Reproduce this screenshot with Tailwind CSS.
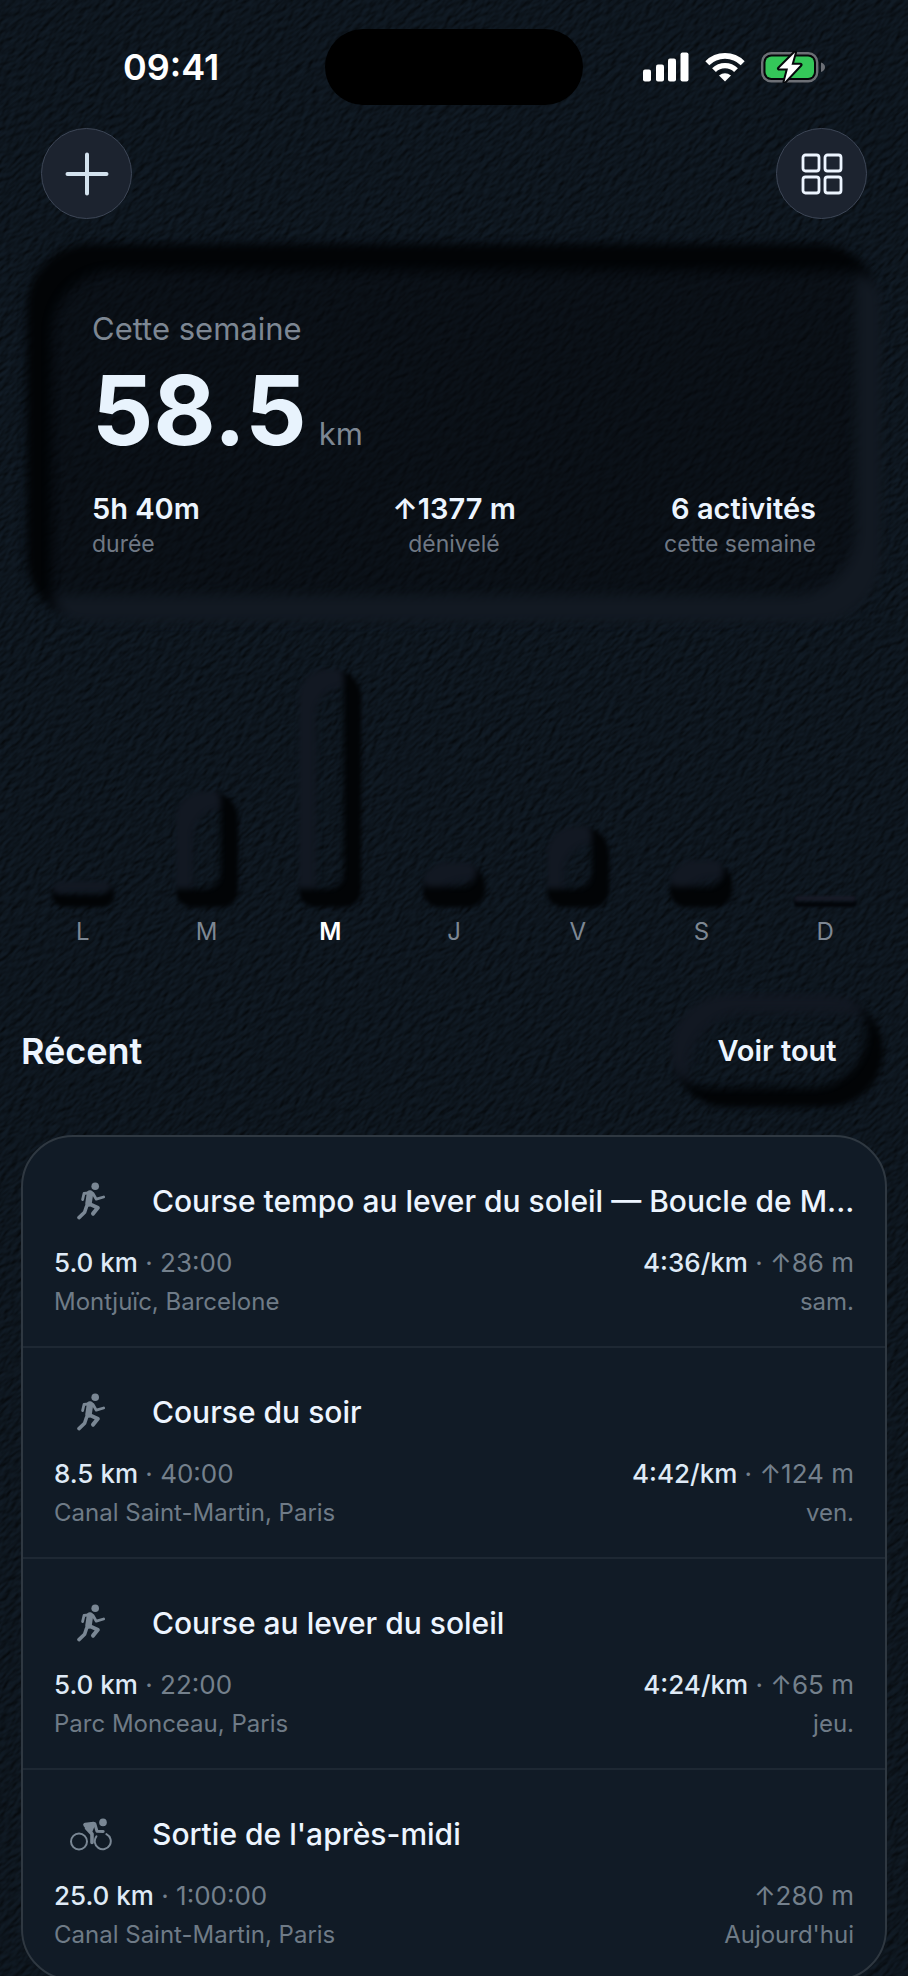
<!DOCTYPE html>
<html lang="fr">
<head>
    <meta charset="UTF-8">
    <meta name="viewport" content="width=device-width, initial-scale=1">
    <title>Cette semaine</title>
    <script src="https://cdn.jsdelivr.net/npm/@tailwindcss/browser@4"></script>
</head>
<body class="relative min-h-screen overflow-x-hidden bg-[#0c141c] font-['Inter',sans-serif] text-[#edf5ff]">
<!-- Leather background -->
<svg class="absolute inset-0 -z-10 h-full w-full" aria-hidden="true">
    <filter id="leather" x="0" y="0" width="100%" height="100%" color-interpolation-filters="sRGB">
        <feTurbulence type="fractalNoise" baseFrequency="0.1 0.2" numOctaves="2" seed="4" />
        <feDiffuseLighting surfaceScale="1.5" diffuseConstant="1" lighting-color="#121d28">
            <feDistantLight azimuth="270" elevation="48" />
        </feDiffuseLighting>
    </filter>
    <g transform="rotate(-42)">
        <rect x="-1600" y="-100" width="2700" height="2500" filter="url(#leather)" />
    </g>
</svg>
<!-- Icons -->
<svg class="hidden">
    <symbol id="run" viewBox="0 0 28 38">
        <circle cx="18.2" cy="4.2" r="3.8" fill="currentColor" />
        <g fill="none" stroke="currentColor" stroke-linecap="round" stroke-linejoin="round">
            <path d="M13 11.5 L11.5 21.5" stroke-width="6.5" />
            <path d="M13.5 10.7 L7 11.5 L5.6 17.6" stroke-width="2.8" />
            <path d="M16 11.5 L19.3 17.2 L26.6 15" stroke-width="2.8" />
            <path d="M12.5 22 L20.8 25.8 L16 31.6" stroke-width="4" />
            <path d="M9.5 24.5 L7.6 30.2 L2 35.6" stroke-width="3.6" />
        </g>
    </symbol>
    <symbol id="bike" viewBox="0 0 42 33">
        <circle cx="33" cy="4.4" r="3.8" fill="currentColor" />
        <g fill="none" stroke="currentColor" stroke-linecap="round" stroke-linejoin="round">
            <circle cx="9" cy="23.5" r="8" stroke-width="2" />
            <path d="M36.4 16.1 A8 8 0 1 1 26.4 18.4" stroke-width="2" />
            <path d="M15.5 7 L24.8 5.8 L27 13.2 L33.2 13.4" stroke-width="3" />
            <path d="M15.2 6.8 L23.5 5.8 L20.6 12.8 Z" stroke-width="4" fill="currentColor" />
            <path d="M16.5 10 L22 16 L22 24.5" stroke-width="3.6" />
        </g>
    </symbol>
</svg>

<!-- Status bar -->
<div class="grid grid-cols-3 items-center px-[41px] pt-[29px]">
    <div class="pl-[82px] text-[36px] leading-[76px] font-semibold text-white">09:41</div>
    <div class="h-[76px] w-[258px] justify-self-center rounded-full bg-black"></div>
    <div class="flex items-center justify-end gap-4 pr-[42px]">
        <svg class="h-[30px] w-[46px]" viewBox="0 0 46 30" fill="#fff">
            <rect x="0" y="17.5" width="8" height="12" rx="2" />
            <rect x="13" y="12.5" width="8" height="17" rx="2" />
            <rect x="25" y="6.5" width="8" height="23" rx="2" />
            <rect x="37.5" y="0.5" width="8" height="29" rx="2" />
        </svg>
        <svg class="h-[30px] w-10" viewBox="0 0 40 30" fill="none" stroke="#fff">
            <path d="M2.3 11.2 A25 25 0 0 1 37.7 11.2" stroke-width="5.6" />
            <path d="M9 18.2 A15.6 15.6 0 0 1 31 18.2" stroke-width="5.4" />
            <path d="M20 29.5 L14 23.6 Q20 19 26 23.6 Z" fill="#fff" stroke="none" />
        </svg>
        <svg class="h-8 w-16" viewBox="0 0 64 32">
            <rect x="1.2" y="2.2" width="55" height="28" rx="9" fill="#05070a" stroke="#6c6f75" stroke-width="2.4" />
            <rect x="4.5" y="5.5" width="48.5" height="21.5" rx="6" fill="#34c759" />
            <path d="M60 11.5 Q64 13 64 16 Q64 19.5 60 21 Z" fill="#6c6f75" />
            <path d="M34 1.5 L18 17.5 H27 L23.5 31 L39.5 13.8 H30.5 Z" fill="#fff" stroke="#05070a" stroke-width="4" stroke-linejoin="round" paint-order="stroke" />
        </svg>
    </div>
</div>

<!-- Toolbar -->
<header class="flex justify-between px-[41px] pt-[23px]">
    <button type="button" aria-label="Ajouter" class="flex size-[91px] items-center justify-center rounded-full border border-[#3d4656] bg-[#1c232f]">
        <svg class="size-11" viewBox="0 0 44 44" stroke="#d3e2ee" stroke-width="4" stroke-linecap="round">
            <path d="M22 2.5 V41.5 M2.5 22 H41.5" />
        </svg>
    </button>
    <button type="button" aria-label="Tableau de bord" class="flex size-[91px] items-center justify-center rounded-full border border-[#3d4656] bg-[#1c232f]">
        <svg class="size-[42px]" viewBox="0 0 42 42" fill="none" stroke="#edf5ff" stroke-width="2.8">
            <rect x="2" y="2" width="16" height="16" rx="2.5" />
            <rect x="24" y="2" width="16" height="16" rx="2.5" />
            <rect x="2" y="24" width="16" height="16" rx="2.5" />
            <rect x="24" y="24" width="16" height="16" rx="2.5" />
        </svg>
    </button>
</header>

<main class="px-[21px]">
    <!-- Weekly summary -->
    <section class="relative mt-[39px] px-[71px] pt-[51px] pb-[49px]">
        <div class="absolute inset-x-[6px] -inset-y-[14px] -z-10 rounded-[64px] bg-[#07080d]/45 shadow-[inset_24px_26px_8px_#020406,inset_-26px_-28px_6px_#121922] blur-[4px]"></div>
        <h1 class="text-[31px] leading-10 text-[#7d8793]">Cette semaine</h1>
        <p class="mt-[2px] flex items-baseline gap-3">
            <span class="text-[96px] leading-[118px] font-bold text-[#e8f3fd]">58.5</span>
            <span class="text-[31px] text-[#7d8793]">km</span>
        </p>
        <dl class="mt-5 grid grid-cols-3 text-[23px] leading-[30px] text-[#6f7884]">
            <div class="flex flex-col-reverse">
                <dt>durée</dt>
                <dd class="text-[29px] leading-10 font-semibold text-[#edf5ff]">5h 40m</dd>
            </div>
            <div class="flex flex-col-reverse text-center">
                <dt>dénivelé</dt>
                <dd class="text-[29px] leading-10 font-semibold text-[#edf5ff]">↑1377 m</dd>
            </div>
            <div class="flex flex-col-reverse text-right">
                <dt>cette semaine</dt>
                <dd class="text-[29px] leading-10 font-semibold text-[#edf5ff]">6 activités</dd>
            </div>
        </dl>
    </section>

    <!-- Daily distance chart -->
    <section class="mt-[61px] grid grid-cols-7 text-center text-2xl leading-[30px] text-[#7d8793]">
        <div class="flex flex-col items-center justify-end gap-[10px]">
            <div class="w-[62px] rounded-xl shadow-[inset_-2px_-12px_3px_#020406,inset_4px_12px_4px_#121822] blur-[2px]" style="height: 26px"></div>
            <span>L</span>
        </div>
        <div class="flex flex-col items-center justify-end gap-[10px]">
            <div class="w-[62px] rounded-t-[28px] rounded-b-2xl shadow-[inset_-17px_-18px_4px_#020406,inset_17px_18px_4px_#121822] blur-[2px]" style="height: 116px"></div>
            <span>M</span>
        </div>
        <div class="flex flex-col items-center justify-end gap-[10px]">
            <div class="w-[62px] rounded-t-[28px] rounded-b-2xl shadow-[inset_-17px_-18px_4px_#020406,inset_17px_18px_4px_#121822] blur-[2px]" style="height: 238px"></div>
            <span class="font-semibold text-white">M</span>
        </div>
        <div class="flex flex-col items-center justify-end gap-[10px]">
            <div class="w-[62px] rounded-t-[24px] rounded-b-2xl shadow-[inset_-8px_-20px_5px_#020406,inset_17px_20px_6px_#121822] blur-[2px]" style="height: 45px"></div>
            <span>J</span>
        </div>
        <div class="flex flex-col items-center justify-end gap-[10px]">
            <div class="w-[62px] rounded-t-[28px] rounded-b-2xl shadow-[inset_-17px_-18px_4px_#020406,inset_17px_18px_4px_#121822] blur-[2px]" style="height: 81px"></div>
            <span>V</span>
        </div>
        <div class="flex flex-col items-center justify-end gap-[10px]">
            <div class="w-[62px] rounded-t-[24px] rounded-b-2xl shadow-[inset_-8px_-20px_5px_#020406,inset_17px_20px_6px_#121822] blur-[2px]" style="height: 47px"></div>
            <span>S</span>
        </div>
        <div class="flex flex-col items-center justify-end gap-[10px]">
            <div class="w-[62px] rounded-sm shadow-[inset_0_-5px_2px_#03060a,inset_0_5px_2px_#171a26] blur-[1px]" style="height: 11px"></div>
            <span>D</span>
        </div>
    </section>

    <!-- Recent activities -->
    <section>
        <div class="mt-12 flex items-center justify-between">
            <h2 class="text-[36px] leading-[42px] font-semibold">Récent</h2>
            <button type="button" class="relative mr-1 h-[112px] w-[212px] text-[29px] font-semibold">
                <span class="absolute inset-0 -z-10 rounded-full shadow-[inset_-16px_-19px_6px_#020406,inset_18px_19px_6px_#121822] blur-[3px]"></span>
                Voir tout
            </button>
        </div>
        <ul class="mt-[28px] divide-y-2 divide-[#1e2833] overflow-hidden rounded-[52px] border-2 border-[#2f3841] bg-[#111b26]">
            <li>
                <a href="#" class="block px-[31px] pt-[43px] pb-6">
                    <div class="flex items-center gap-6">
                        <span class="flex w-[74px] shrink-0 justify-center text-[#7a8794]"><svg class="h-[38px] w-7"><use href="#run" /></svg></span>
                        <h3 class="text-[30px] leading-[42px] font-medium whitespace-nowrap">Course tempo au lever du soleil — Boucle de M...</h3>
                    </div>
                    <div class="mt-[21px] flex justify-between text-[26px] leading-[39px] text-[#74808c]">
                        <p><span class="font-medium text-[#dfeaf6]">5.0 km</span> · 23:00</p>
                        <p><span class="font-medium text-[#dfeaf6]">4:36/km</span> · ↑86 m</p>
                    </div>
                    <div class="flex justify-between text-2xl leading-10 text-[#6f7b87]">
                        <p>Montjuïc, Barcelone</p>
                        <p>sam.</p>
                    </div>
                </a>
            </li>
            <li>
                <a href="#" class="block px-[31px] pt-[43px] pb-6">
                    <div class="flex items-center gap-6">
                        <span class="flex w-[74px] shrink-0 justify-center text-[#7a8794]"><svg class="h-[38px] w-7"><use href="#run" /></svg></span>
                        <h3 class="text-[30px] leading-[42px] font-medium whitespace-nowrap">Course du soir</h3>
                    </div>
                    <div class="mt-[21px] flex justify-between text-[26px] leading-[39px] text-[#74808c]">
                        <p><span class="font-medium text-[#dfeaf6]">8.5 km</span> · 40:00</p>
                        <p><span class="font-medium text-[#dfeaf6]">4:42/km</span> · ↑124 m</p>
                    </div>
                    <div class="flex justify-between text-2xl leading-10 text-[#6f7b87]">
                        <p>Canal Saint-Martin, Paris</p>
                        <p>ven.</p>
                    </div>
                </a>
            </li>
            <li>
                <a href="#" class="block px-[31px] pt-[43px] pb-6">
                    <div class="flex items-center gap-6">
                        <span class="flex w-[74px] shrink-0 justify-center text-[#7a8794]"><svg class="h-[38px] w-7"><use href="#run" /></svg></span>
                        <h3 class="text-[30px] leading-[42px] font-medium whitespace-nowrap">Course au lever du soleil</h3>
                    </div>
                    <div class="mt-[21px] flex justify-between text-[26px] leading-[39px] text-[#74808c]">
                        <p><span class="font-medium text-[#dfeaf6]">5.0 km</span> · 22:00</p>
                        <p><span class="font-medium text-[#dfeaf6]">4:24/km</span> · ↑65 m</p>
                    </div>
                    <div class="flex justify-between text-2xl leading-10 text-[#6f7b87]">
                        <p>Parc Monceau, Paris</p>
                        <p>jeu.</p>
                    </div>
                </a>
            </li>
            <li>
                <a href="#" class="block px-[31px] pt-[43px] pb-6">
                    <div class="flex items-center gap-6">
                        <span class="flex w-[74px] shrink-0 justify-center text-[#7a8794]"><svg class="h-[33px] w-[42px]"><use href="#bike" /></svg></span>
                        <h3 class="text-[30px] leading-[42px] font-medium whitespace-nowrap">Sortie de l'après-midi</h3>
                    </div>
                    <div class="mt-[21px] flex justify-between text-[26px] leading-[39px] text-[#74808c]">
                        <p><span class="font-medium text-[#dfeaf6]">25.0 km</span> · 1:00:00</p>
                        <p>↑280 m</p>
                    </div>
                    <div class="flex justify-between text-2xl leading-10 text-[#6f7b87]">
                        <p>Canal Saint-Martin, Paris</p>
                        <p>Aujourd'hui</p>
                    </div>
                </a>
            </li>
        </ul>
    </section>
</main>
</body>
</html>
